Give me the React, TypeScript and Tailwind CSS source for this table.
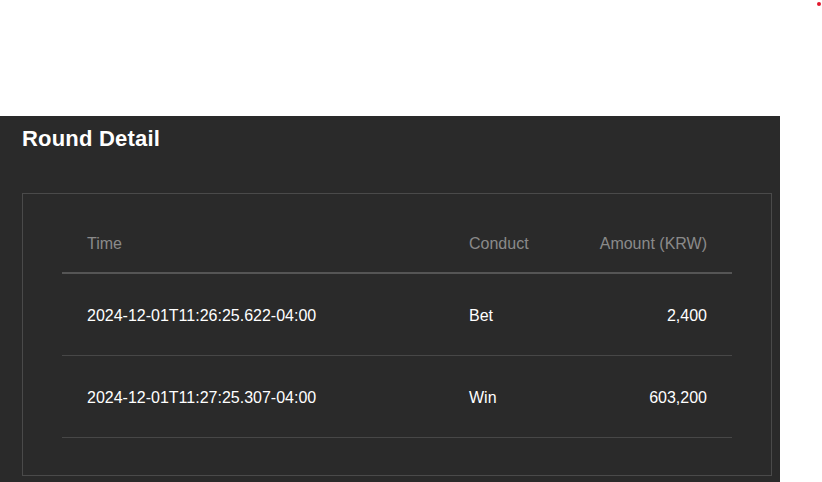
import React from 'react';

type Row = { time: string; conduct: string; amount: string };

const rows: Row[] = [
  { time: '2024-12-01T11:26:25.622-04:00', conduct: 'Bet', amount: '2,400' },
  { time: '2024-12-01T11:27:25.307-04:00', conduct: 'Win', amount: '603,200' },
];

const cols = 'grid grid-cols-[382px_100px_188px]';

export default function App() {
  return (
    <div className="relative min-h-[482px] bg-white font-['Liberation_Sans',Arial,sans-serif]">
      {/* top blank area */}
      <div className="h-[116px]" />
      <span className="absolute left-[817px] top-[2px] h-[4px] w-[4px] rounded-full bg-[#e3182d]" />

      {/* panel */}
      <div className="w-[780px] min-h-[366px] bg-[#2a2a2a] pl-[22px] pr-[8px] pt-[10px]">
        <h2 className="text-[22px] leading-[25px] font-bold tracking-[0.2px] text-white">Round Detail</h2>

        <div className="mt-[42px] border border-[#4a4a4a] px-[39px] pt-[20px] pb-[37px]">
          <div className="w-[670px]">
            <div className={`${cols} h-[60px] items-center border-b-2 border-[#555] pt-[2px] text-[16px] leading-[18px] text-[#8a8a8a]`}>
              <div className="pl-[25px]">Time</div>
              <div className="pl-[25px]">Conduct</div>
              <div className="pr-[25px] text-right">Amount (KRW)</div>
            </div>
            {rows.map((r) => (
              <div
                key={r.time}
                className={`${cols} h-[82px] items-center border-b border-[#474747] pt-[2px] text-[16px] leading-[18px] text-white`}
              >
                <div className="pl-[25px]">{r.time}</div>
                <div className="pl-[25px]">{r.conduct}</div>
                <div className="pr-[25px] text-right">{r.amount}</div>
              </div>
            ))}
          </div>
        </div>
      </div>
    </div>
  );
}
